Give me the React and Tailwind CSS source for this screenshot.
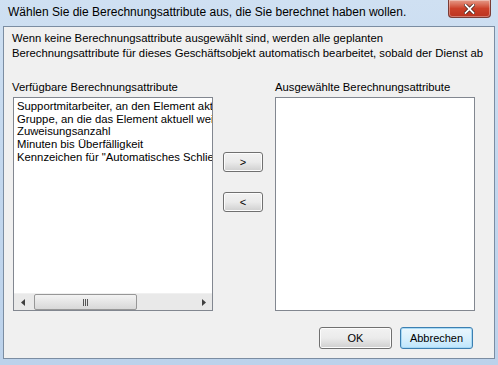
import { useState } from "react";

const AVAILABLE = [
  "Supportmitarbeiter, an den Element aktuell zugewiesen ist",
  "Gruppe, an die das Element aktuell weitergeleitet ist",
  "Zuweisungsanzahl",
  "Minuten bis Überfälligkeit",
  'Kennzeichen für "Automatisches Schließen"',
];

// ── Small pieces ───────────────────────────────────────────────────────────
function WinButton({ children, className = "", focused = false }) {
  return (
    <button
      className={
        "flex items-center justify-center rounded-[3px] border text-[11px] text-black " +
        (focused
          ? "border-[#3c7fb1] bg-gradient-to-b from-[#eaf6fd] via-[#d9f0fc] to-[#bee6fd] shadow-[inset_0_0_0_1px_#a7d9f5] "
          : "border-[#707070] bg-gradient-to-b from-[#f2f2f2] via-[#ebebeb] to-[#cfcfcf] shadow-[inset_0_0_0_1px_#fcfcfc] ") +
        className
      }
    >
      {children}
    </button>
  );
}

function HScrollbar() {
  return (
    <div className="flex h-[17px] items-stretch bg-[#e9e9e9] border-t border-[#f0f0f0]">
      <div className="flex w-[17px] items-center justify-center">
        <svg width="4" height="7" viewBox="0 0 4 7"><path d="M4 0 L0 3.5 L4 7 Z" fill="#404040" /></svg>
      </div>
      <div className="ml-[3px] flex w-[103px] items-center justify-center rounded-[2px] border border-[#979797] bg-gradient-to-b from-[#f3f3f3] to-[#d8d8d8]">
        <div className="flex gap-[1px]">
          <div className="h-[7px] w-[1px] bg-[#555]" />
          <div className="h-[7px] w-[1px] bg-[#555]" />
          <div className="h-[7px] w-[1px] bg-[#555]" />
        </div>
      </div>
      <div className="flex-1" />
      <div className="flex w-[17px] items-center justify-center">
        <svg width="4" height="7" viewBox="0 0 4 7"><path d="M0 0 L4 3.5 L0 7 Z" fill="#404040" /></svg>
      </div>
    </div>
  );
}

export default function App() {
  const [items] = useState(AVAILABLE);

  return (
    <div
      className="flex h-[365px] w-[498px] flex-col bg-gradient-to-b from-[#cfe0f2] via-[#c2d7ee] to-[#bcd2eb] px-[3px] pb-[6px]"
      style={{ fontFamily: '"Liberation Sans", Arial, sans-serif' }}
    >
      {/* ── Title bar ── */}
      <div className="flex h-[26px] items-start justify-between">
        <span className="pl-[5px] pt-[5px] text-[12px] leading-[15px] text-black">
          Wählen Sie die Berechnungsattribute aus, die Sie berechnet haben wollen.
        </span>
        <div className="mr-[4px] flex h-[18px] w-[43px] items-center justify-center rounded-b-[4px] border border-t-0 border-[#7a3c36] bg-gradient-to-b from-[#e59a88] via-[#cc4129] to-[#bb3420] shadow-[inset_0_0_0_1px_rgba(255,255,255,0.35)]">
          <svg width="11" height="10" viewBox="0 0 11 10">
            <path d="M1.5 1 L9.5 9 M9.5 1 L1.5 9" stroke="#3a1a14" strokeWidth="3.2" strokeLinecap="square" />
            <path d="M1.5 1 L9.5 9 M9.5 1 L1.5 9" stroke="#ffffff" strokeWidth="1.8" strokeLinecap="square" />
          </svg>
        </div>
      </div>

      {/* ── Client area ── */}
      <div className="flex flex-1 flex-col border border-[#7b8da2] bg-[#f0f0f0] text-[11.3px] text-black">
        <p className="ml-[8px] mt-[4px] whitespace-nowrap leading-[15px]">
          Wenn keine Berechnungsattribute ausgewählt sind, werden alle geplanten
          <br />
          Berechnungsattribute für dieses Geschäftsobjekt automatisch bearbeitet, sobald der Dienst ab
        </p>

        <div className="ml-[9px] mt-[20px] flex">
          {/* Available */}
          <div className="flex flex-col">
            <span className="ml-[-1px] leading-[13px]">Verfügbare Berechnungsattribute</span>
            <div className="mt-[3px] flex h-[214px] w-[200px] flex-col border border-[#828790] bg-white">
              <div className="flex-1 overflow-hidden pl-[3px] pt-[2px]">
                {items.map((t) => (
                  <div key={t} className="whitespace-nowrap leading-[12.7px]">{t}</div>
                ))}
              </div>
              <HScrollbar />
            </div>
          </div>

          {/* Move buttons */}
          <div className="ml-[10px] flex flex-col pt-[71px]">
            <WinButton className="h-[20px] w-[40px]">&gt;</WinButton>
            <WinButton className="mt-[20px] h-[20px] w-[40px]">&lt;</WinButton>
          </div>

          {/* Selected */}
          <div className="ml-[12px] flex flex-col">
            <span className="leading-[13px]">Ausgewählte Berechnungsattribute</span>
            <div className="mt-[3px] h-[214px] w-[200px] border border-[#828790] bg-white" />
          </div>
        </div>

        {/* ── Footer ── */}
        <div className="mr-[21px] mt-[16px] flex justify-end gap-[8px]">
          <WinButton className="h-[22px] w-[73px]">OK</WinButton>
          <WinButton focused className="h-[22px] w-[73px]">Abbrechen</WinButton>
        </div>
      </div>
    </div>
  );
}
